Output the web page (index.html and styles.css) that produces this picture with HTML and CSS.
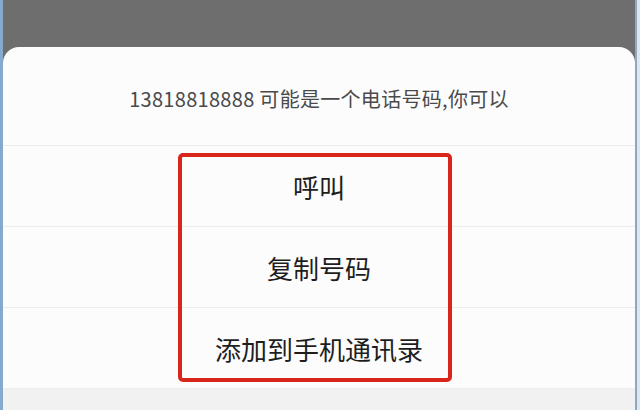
FILE: index.html
```html
<!DOCTYPE html>
<html lang="zh-CN">
<head>
<meta charset="utf-8">
<link rel="stylesheet" href="styles.css">
</head>
<body>
<div class="frame">
  <div class="edge-left"></div>
  <div class="screen">
    <div class="dim"></div>
    <div class="sheet">
      <div class="title">13818818888 可能是一个电话号码,你可以</div>
      <div class="item">呼叫</div>
      <div class="item">复制号码</div>
      <div class="item">添加到手机通讯录</div>
      <div class="footer"></div>
    </div>
    <div class="highlight"></div>
  </div>
  <div class="edge-right"></div>
</div>
</body>
</html>
```
FILE: styles.css
```css
html, body {
  margin: 0;
  padding: 0;
  width: 640px;
  height: 410px;
  overflow: hidden;
  font-family: "Noto Sans CJK SC", "Noto Sans", sans-serif;
}
.frame {
  display: flex;
  width: 640px;
  height: 410px;
  background: #6e6e6e;
}
.edge-left {
  width: 3px;
  background: #86aacb;
}
.edge-right {
  width: 5px;
  background: linear-gradient(to right, #8aa9c4 0, #8aa9c4 2px, #dfe6ee 2px);
}
.screen {
  flex: 1;
  position: relative;
  display: flex;
  flex-direction: column;
}
.dim {
  height: 47px;
  background: #6e6e6e;
}
.sheet {
  flex: 1;
  background: #fcfcfc;
  border-radius: 16px 16px 0 0;
  display: flex;
  flex-direction: column;
  overflow: hidden;
}
.title {
  height: 99px;
  border-bottom: 1px solid #ececec;
  display: flex;
  align-items: center;
  justify-content: center;
  font-size: 20px;
  letter-spacing: 0.3px;
  color: #4a4a4a;
  padding-top: 4px;
  box-sizing: border-box;
}
.item {
  height: 81px;
  border-bottom: 1px solid #ededed;
  display: flex;
  align-items: center;
  justify-content: center;
  font-size: 26px;
  color: #1e1e1e;
  box-sizing: border-box;
}
.item:last-of-type {
  border-bottom: none;
}
.footer {
  flex: 1;
  background: #f1f1f1;
}
.highlight {
  position: absolute;
  left: 175px;
  top: 153px;
  width: 274px;
  height: 229px;
  box-sizing: border-box;
  border: 4px solid #d8261d;
  border-radius: 5px;
}
```
